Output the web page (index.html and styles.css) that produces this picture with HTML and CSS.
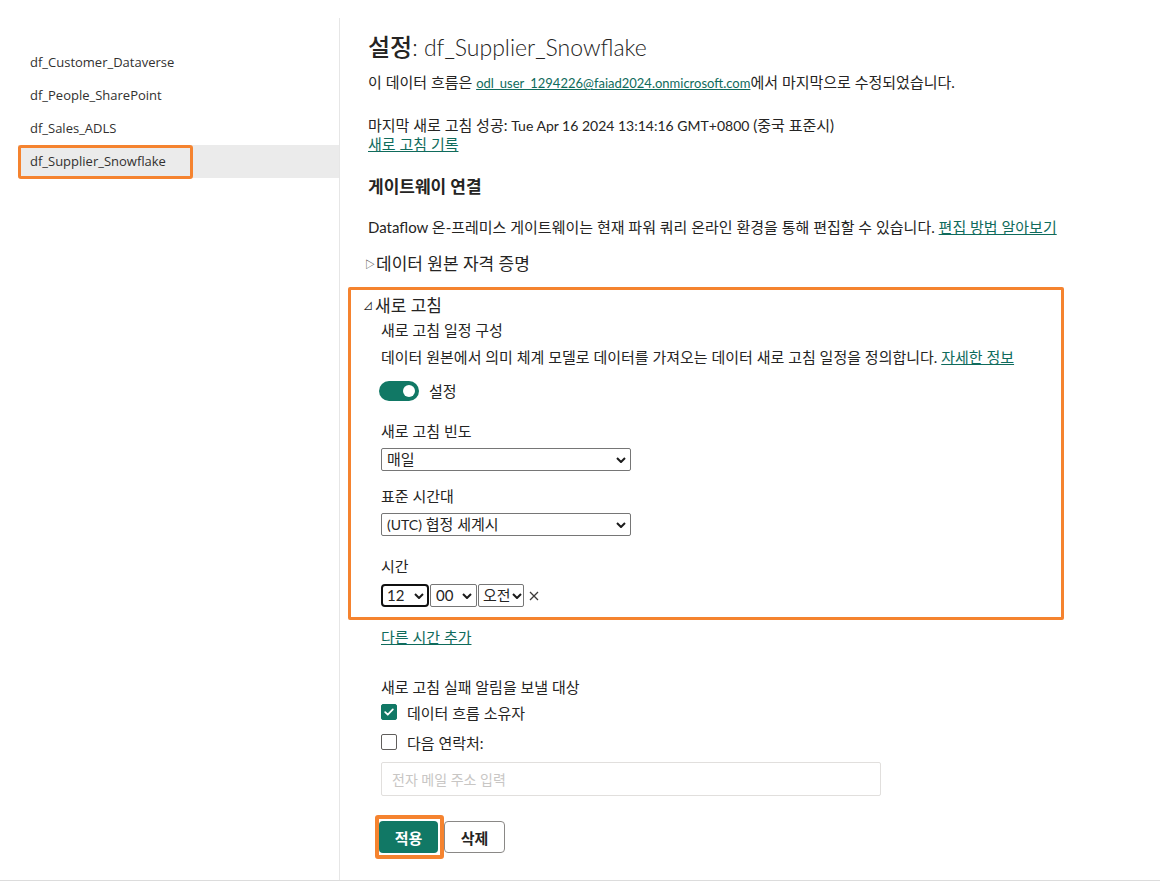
FILE: index.html
```html
<!DOCTYPE html>
<html lang="ko">
<head>
<meta charset="utf-8">
<title>설정: df_Supplier_Snowflake</title>
<link rel="stylesheet" href="styles.css">
</head>
<body>
<div class="page">
  <aside class="sidebar">
    <ul class="flow-list">
      <li class="flow-item">df_Customer_Dataverse</li>
      <li class="flow-item">df_People_SharePoint</li>
      <li class="flow-item">df_Sales_ADLS</li>
      <li class="flow-item is-selected"><span class="highlight-ring"></span>df_Supplier_Snowflake</li>
    </ul>
  </aside>
  <main class="main">
    <h1 class="title"><span class="title-ko">설정</span>: df_Supplier_Snowflake</h1>
    <p class="meta">이 데이터 흐름은 <a class="link email-addr" href="#">odl_user_1294226@faiad2024.onmicrosoft.com</a>에서 마지막으로 수정되었습니다.</p>
    <p class="refresh-info">마지막 새로 고침 성공: <span class="latin">Tue Apr 16 2024 13:14:16 GMT+0800</span> (중국 표준시)<br><a class="link" href="#">새로 고침 기록</a></p>
    <h2 class="section-title">게이트웨이 연결</h2>
    <p class="gateway-text">Dataflow 온-프레미스 게이트웨이는 현재 파워 쿼리 온라인 환경을 통해 편집할 수 있습니다. <a class="link" href="#">편집 방법 알아보기</a></p>
    <div class="collapsible"><span class="caret">▷</span>데이터 원본 자격 증명</div>

    <section class="refresh-box">
      <div class="collapsible expanded"><span class="caret caret-open">⊿</span>새로 고침</div>
      <div class="refresh-body">
        <div class="sub-title">새로 고침 일정 구성</div>
        <p class="desc">데이터 원본에서 의미 체계 모델로 데이터를 가져오는 데이터 새로 고침 일정을 정의합니다. <a class="link" href="#">자세한 정보</a></p>
        <div class="toggle-row">
          <span class="toggle"><span class="knob"></span></span>
          <span class="toggle-label">설정</span>
        </div>
        <div class="field-label">새로 고침 빈도</div>
        <div class="select wide"><span class="select-text">매일</span><svg class="chev" viewBox="0 0 10 6" width="10" height="6"><path d="M1 1 5 5 9 1" fill="none" stroke="#1b1b1b" stroke-width="2" stroke-linejoin="round"/></svg></div>
        <div class="field-label tz">표준 시간대</div>
        <div class="select wide"><span class="select-text"><span class="latin">(UTC)</span> 협정 세계시</span><svg class="chev" viewBox="0 0 10 6" width="10" height="6"><path d="M1 1 5 5 9 1" fill="none" stroke="#1b1b1b" stroke-width="2" stroke-linejoin="round"/></svg></div>
        <div class="field-label time">시간</div>
        <div class="time-row">
          <div class="select hour focused"><span class="select-text">12</span><svg class="chev" viewBox="0 0 10 6" width="10" height="6"><path d="M1 1 5 5 9 1" fill="none" stroke="#1b1b1b" stroke-width="2" stroke-linejoin="round"/></svg></div>
          <div class="select minute"><span class="select-text">00</span><svg class="chev" viewBox="0 0 10 6" width="10" height="6"><path d="M1 1 5 5 9 1" fill="none" stroke="#1b1b1b" stroke-width="2" stroke-linejoin="round"/></svg></div>
          <div class="select ampm"><span class="select-text">오전</span><svg class="chev" viewBox="0 0 10 6" width="10" height="6"><path d="M1 1 5 5 9 1" fill="none" stroke="#1b1b1b" stroke-width="2" stroke-linejoin="round"/></svg></div>
          <svg class="remove" viewBox="0 0 10 10" width="10" height="10"><path d="M1 1 9 9M9 1 1 9" stroke="#3b3a39" stroke-width="1.3" fill="none"/></svg>
        </div>
      </div>
    </section>

    <div class="after-box">
      <a class="link add-time" href="#">다른 시간 추가</a>
      <div class="notify-label">새로 고침 실패 알림을 보낼 대상</div>
      <div class="check-row first">
        <span class="checkbox checked"><svg viewBox="0 0 16 16" width="16" height="16"><path d="M3.6 8.2 6.6 11.1 12.4 5.0" fill="none" stroke="#fff" stroke-width="2" stroke-linecap="round" stroke-linejoin="round"/></svg></span>
        <span>데이터 흐름 소유자</span>
      </div>
      <div class="check-row">
        <span class="checkbox"></span>
        <span>다음 연락처:</span>
      </div>
      <input class="email" type="text" placeholder="전자 메일 주소 입력">
      <div class="actions">
        <span class="apply-ring"><button class="btn primary">적용</button></span>
        <button class="btn secondary">삭제</button>
      </div>
    </div>
  </main>
</div>
<div class="bottom-rule"></div>
</body>
</html>
```

FILE: styles.css
```css
* { box-sizing: border-box; }
html, body { margin: 0; padding: 0; background: #fff; }
body {
  font-family: "Lato", "Noto Sans CJK KR", sans-serif;
  font-size: 15px;
  color: #252423;
  width: 1160px;
  height: 881px;
  overflow: hidden;
}
p { margin: 0; }
.latin { font-size: 14px; }
.page {
  display: flex;
  height: 880px;
  padding-top: 18px;
}
.sidebar {
  width: 340px;
  flex: 0 0 340px;
  border-right: 1px solid #e6e6e6;
  padding-top: 28px;
}
.flow-list {
  list-style: none;
  margin: 0 0 0 18px;
  padding: 0;
}
.flow-item {
  position: relative;
  height: 33px;
  line-height: 33px;
  padding-left: 12px;
  font-family: "Open Sans", "Noto Sans CJK KR", sans-serif;
  font-size: 13px;
  color: #323130;
}
.flow-item.is-selected { background: #ebebeb; }
.highlight-ring {
  position: absolute;
  left: 0;
  top: 0;
  width: 175px;
  height: 34px;
  border: 3px solid #f5832f;
  border-radius: 3px;
}
.main {
  flex: 1;
  padding: 13px 0 0 28px;
}
.title {
  margin: 0;
  font-size: 23px;
  line-height: 32px;
  font-weight: 300;
}
.title-ko { font-weight: 500; font-size: 24px; }
.meta { margin-top: 9px; line-height: 20px; }
.email-addr { font-size: 13px; }
.refresh-info { margin-top: 23px; line-height: 18px; }
.link { color: #0f6b5c; text-decoration: underline; }
.section-title {
  margin: 24px 0 0;
  font-size: 17px;
  line-height: 20px;
  font-weight: 700;
}
.gateway-text { margin-top: 20px; line-height: 20px; }
.collapsible {
  margin-top: 16px;
  font-size: 17px;
  line-height: 22px;
  display: flex;
  align-items: center;
}
.caret {
  font-size: 10px;
  width: 10px;
  margin-left: -3px;
  margin-right: 1px;
  display: inline-block;
}
.refresh-box {
  margin-top: 12px;
  margin-left: -20px;
  width: 716px;
  border: 3px solid #f5832f;
  border-radius: 2px;
  padding: 5px 0 10px 12px;
}
.refresh-box .collapsible { margin-top: 0; }
.caret-open { margin-left: 0; margin-right: 2px; }
.refresh-body { padding-left: 18px; }
.sub-title { margin-top: 3px; line-height: 20px; }
.desc { margin-top: 7px; line-height: 20px; }
.toggle-row {
  margin-top: 14px;
  display: flex;
  align-items: center;
  height: 20px;
}
.toggle {
  width: 40px;
  height: 20px;
  border-radius: 10px;
  background: #117865;
  display: flex;
  align-items: center;
  justify-content: flex-end;
  padding-right: 4px;
  margin-left: -2px;
}
.knob {
  width: 12px;
  height: 12px;
  border-radius: 50%;
  background: #fff;
}
.toggle-label { margin-left: 10px; line-height: 20px; }
.field-label { margin-top: 20px; line-height: 20px; }
.field-label.tz { margin-top: 15px; }
.select {
  display: flex;
  align-items: center;
  justify-content: space-between;
  margin-top: 7px;
  height: 23px;
  border: 1px solid #767676;
  border-radius: 2px;
  background: #fff;
  padding: 0 4px 0 5px;
}
.select-text { line-height: 21px; white-space: nowrap; }
.chev { display: block; flex: 0 0 auto; }
.select.wide { width: 250px; }
.time-row {
  margin-top: 8px;
  display: flex;
  align-items: center;
}
.time-row .select { margin-top: 0; }
.select.hour { width: 48px; }
.select.minute { width: 47px; margin-left: 1px; }
.select.ampm { width: 46px; margin-left: 1px; padding: 0 3px 0 4px; }
.select.ampm .chev { margin-left: 1px; }
.select.focused {
  border: 2px solid #101010;
  border-radius: 4px;
  padding-left: 4px;
  padding-right: 3px;
}
.remove { display: block; margin-left: 5px; }
.after-box { padding-left: 13px; }
.add-time { display: block; margin-top: 7px; line-height: 20px; width: max-content; }
.notify-label { margin-top: 30px; line-height: 20px; }
.check-row {
  display: flex;
  align-items: center;
  height: 20px;
  margin-top: 10px;
}
.check-row.first { margin-top: 5px; }
.checkbox {
  width: 16px;
  height: 16px;
  border: 1px solid #605e5c;
  border-radius: 2px;
  margin-right: 10px;
  display: flex;
  align-items: center;
  justify-content: center;
  background: #fff;
}
.checkbox.checked { background: #117865; border-color: #117865; }
.checkbox svg { display: block; }
.email {
  display: block;
  margin-top: 10px;
  width: 500px;
  height: 34px;
  border: 1px solid #e1dfdd;
  border-radius: 2px;
  padding: 0 10px;
  font-family: inherit;
  font-size: 14px;
  color: #252423;
}
.email::placeholder { color: #c8c6c4; }
.actions {
  margin-top: 19px;
  margin-left: -6px;
  display: flex;
  align-items: flex-start;
}
.apply-ring {
  display: block;
  border: 4px solid #f5832f;
  border-radius: 3px;
  padding: 2px 2px 2px 0;
}
.btn {
  display: block;
  height: 32px;
  font-family: inherit;
  font-size: 15px;
  font-weight: 700;
  border-radius: 4px;
  cursor: pointer;
}
.btn.primary {
  width: 59px;
  background: #117865;
  color: #fff;
  border: 0;
}
.btn.secondary {
  margin-top: 6px;
  width: 61px;
  background: #fff;
  color: #252423;
  border: 1px solid #8a8886;
}
.bottom-rule {
  height: 1px;
  background: #dcdcdc;
}
```
